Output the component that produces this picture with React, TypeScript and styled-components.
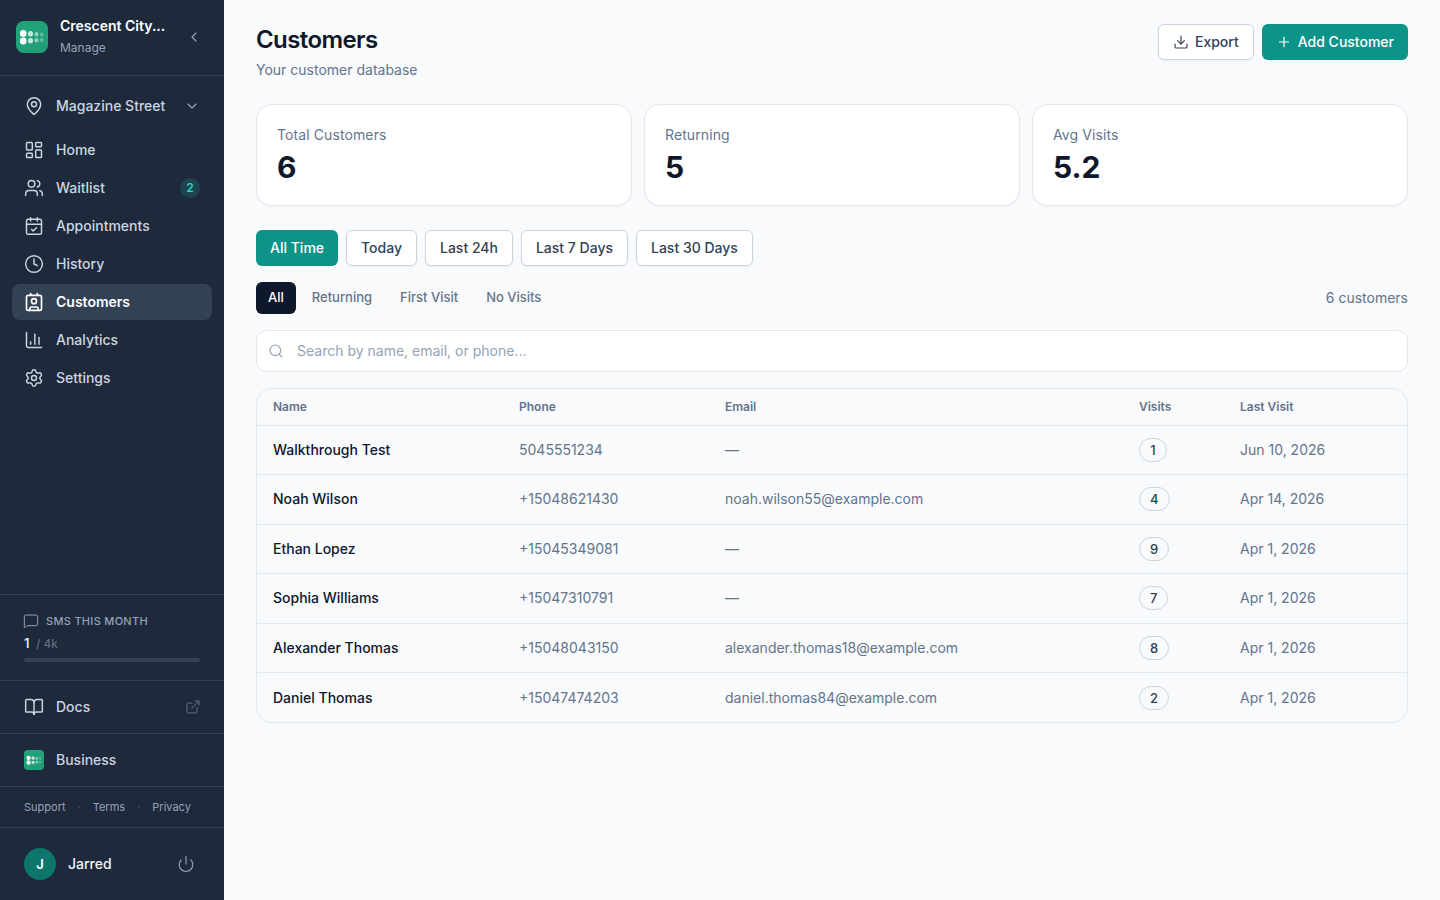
import React from 'react';
import styled, { createGlobalStyle } from 'styled-components';
import {
  BookOpen,
  CalendarCheck,
  ChartColumn,
  ChevronDown,
  ChevronLeft,
  Clock,
  Contact,
  Download,
  ExternalLink,
  LayoutDashboard,
  MapPin,
  MessageSquare,
  Plus,
  Power,
  Search,
  Settings,
  Users,
} from 'lucide-react';

const GlobalStyle = createGlobalStyle`
  * { box-sizing: border-box; }
  html, body { margin: 0; padding: 0; height: 100%; }
  body {
    font-family: Inter, "Liberation Sans", sans-serif;
    line-height: 20px;
    background: #f8fafc;
    color: #0f172a;
  }
`;

const Page = styled.div`
  display: flex;
  width: 100%;
  height: 900px;
  overflow: hidden;
  background: #f8fafc;
`;

const Sidebar = styled.aside`
  width: 224px;
  flex-shrink: 0;
  height: 100%;
  display: flex;
  flex-direction: column;
  background: #1e293b;
`;

const Brand = styled.div`
  height: 76px;
  flex-shrink: 0;
  display: flex;
  align-items: center;
  padding: 0 22px 2px 16px;
  border-bottom: 1px solid #334155;
`;

const BrandTile = styled.div<{ $size: number; $radius: number }>`
  width: ${p => p.$size}px;
  height: ${p => p.$size}px;
  border-radius: ${p => p.$radius}px;
  flex-shrink: 0;
  display: flex;
  background: linear-gradient(135deg, #22a57a, #1f9d78);
`;

const BrandText = styled.div`
  flex: 1;
  margin: 0 0 2px 12px;
  min-width: 0;
`;

const BrandName = styled.div`
  color: #fff;
  font-size: 14px;
  font-weight: 600;
  line-height: 20px;
`;

const BrandSub = styled.div`
  color: #94a3b8;
  font-size: 12px;
  line-height: 16px;
  margin-top: 4px;
`;

const Collapse = styled.span`
  display: flex;
  color: #94a3b8;
`;

const Nav = styled.nav`
  flex: 1;
  padding: 12px 12px 0;
`;

const LocationRow = styled.div`
  height: 36px;
  display: flex;
  align-items: center;
  gap: 12px;
  padding: 0 12px;
  margin-bottom: 8px;
  color: #cbd5e1;
  font-size: 14px;
  font-weight: 500;
  span { flex: 1; }
`;

const NavItem = styled.a<{ $active?: boolean }>`
  height: 36px;
  margin-bottom: 2px;
  display: flex;
  align-items: center;
  gap: 12px;
  padding: 0 12px;
  border-radius: 8px;
  font-size: 14px;
  font-weight: ${p => (p.$active ? 600 : 500)};
  color: ${p => (p.$active ? '#fff' : '#cbd5e1')};
  background: ${p => (p.$active ? '#334155' : 'transparent')};
  span { flex: 1; }
`;

const NavBadge = styled.b`
  width: 20px;
  height: 20px;
  border-radius: 50%;
  display: flex;
  align-items: center;
  justify-content: center;
  font-size: 12px;
  font-weight: 600;
  color: #2dd4bf;
  background: rgba(20, 184, 166, 0.2);
`;

const SmsBlock = styled.div`
  height: 86px;
  flex-shrink: 0;
  padding: 18px 24px 0;
  border-top: 1px solid #334155;
`;

const SmsHead = styled.div`
  display: flex;
  align-items: center;
  gap: 7px;
  color: #94a3b8;
  font-size: 11px;
  font-weight: 500;
  letter-spacing: 0.3px;
  line-height: 16px;
  svg { margin-left: -1px; }
`;

const SmsCount = styled.div`
  margin-top: 6px;
  font-size: 12px;
  line-height: 16px;
  color: #64748b;
  b { color: #e2e8f0; font-size: 13px; font-weight: 600; margin-right: 3px; }
`;

const SmsTrack = styled.div`
  height: 4px;
  margin-top: 6px;
  border-radius: 2px;
  background: #334155;
`;

const FooterRow = styled.div`
  height: 53px;
  flex-shrink: 0;
  display: flex;
  align-items: center;
  gap: 12px;
  padding: 0 23px 0 24px;
  border-top: 1px solid #334155;
  color: #cbd5e1;
  font-size: 14px;
  font-weight: 500;
  span { flex: 1; }
`;

const FooterLinks = styled.div`
  height: 41px;
  flex-shrink: 0;
  display: flex;
  align-items: center;
  gap: 12px;
  padding: 0 24px;
  border-top: 1px solid #334155;
  font-size: 11px;
  color: #94a3b8;
  i { font-style: normal; color: #475569; }
`;

const UserRow = styled.div`
  height: 73px;
  flex-shrink: 0;
  display: flex;
  align-items: center;
  padding: 0 29px 0 24px;
  border-top: 1px solid #334155;
`;

const Avatar = styled.div`
  width: 32px;
  height: 32px;
  border-radius: 50%;
  display: flex;
  align-items: center;
  justify-content: center;
  background: #0f766e;
  color: #fff;
  font-size: 13px;
  font-weight: 600;
`;

const UserName = styled.span`
  flex: 1;
  margin-left: 12px;
  color: #f1f5f9;
  font-size: 14px;
  font-weight: 500;
`;

const Main = styled.main`
  flex: 1;
  min-width: 0;
  padding: 24px 32px;
`;

const Header = styled.header`
  display: flex;
  justify-content: space-between;
  align-items: flex-start;
  height: 56px;
`;

const Title = styled.h1`
  margin: 0;
  font-size: 24px;
  line-height: 32px;
  font-weight: 600;
  letter-spacing: -0.6px;
  color: #0f172a;
`;

const Subtitle = styled.p`
  margin: 4px 0 0;
  font-size: 14px;
  line-height: 20px;
  color: #64748b;
`;

const Actions = styled.div`
  display: flex;
  gap: 8px;
`;

const Button = styled.button<{ $primary?: boolean }>`
  height: 36px;
  display: flex;
  align-items: center;
  gap: 6px;
  padding: 0 14px;
  border-radius: 6px;
  font-family: inherit;
  font-size: 14px;
  line-height: 20px;
  font-weight: 500;
  border: ${p => (p.$primary ? '0' : '1px solid #cbd5e1')};
  background: ${p => (p.$primary ? '#0d9488' : '#fff')};
  color: ${p => (p.$primary ? '#fff' : '#334155')};
  box-shadow: ${p => (p.$primary ? 'none' : '0 1px 2px rgba(15, 23, 42, 0.05)')};
`;

const Stats = styled.section`
  display: grid;
  grid-template-columns: repeat(3, 1fr);
  gap: 12px;
  margin-top: 24px;
`;

const StatCard = styled.div`
  height: 102px;
  padding: 20px 20px 0;
  background: #fff;
  border: 1px solid #e2e8f0;
  border-radius: 16px;
  box-shadow: 0 1px 2px rgba(15, 23, 42, 0.04);
`;

const StatLabel = styled.div`
  font-size: 14px;
  line-height: 20px;
  letter-spacing: 0.1px;
  color: #64748b;
`;

const StatValue = styled.div`
  margin-top: 4px;
  font-size: 30px;
  line-height: 36px;
  font-weight: 700;
  color: #0f172a;
`;

const Ranges = styled.div`
  display: flex;
  gap: 8px;
  margin-top: 24px;
`;

const FilterRow = styled.div`
  display: flex;
  align-items: center;
  margin-top: 16px;
  height: 32px;
`;

const FilterTab = styled.div<{ $active?: boolean }>`
  height: 32px;
  display: flex;
  align-items: center;
  padding: 0 12px 2px;
  margin-right: 4px;
  border-radius: 6px;
  font-size: 13px;
  font-weight: 500;
  color: ${p => (p.$active ? '#fff' : '#64748b')};
  background: ${p => (p.$active ? '#0f172a' : 'transparent')};
`;

const Count = styled.div`
  margin-left: auto;
  font-size: 14px;
  color: #64748b;
`;

const SearchBox = styled.div`
  height: 42px;
  margin-top: 16px;
  display: flex;
  align-items: center;
  gap: 13px;
  padding: 0 11px;
  background: #fff;
  border: 1px solid #e2e8f0;
  border-radius: 10px;
  font-size: 14px;
  color: #94a3b8;
`;

const TableWrap = styled.div`
  margin-top: 16px;
  border: 1px solid #e2e8f0;
  border-radius: 16px;
  overflow: hidden;
`;

const Table = styled.table`
  width: 100%;
  table-layout: fixed;
  border-collapse: collapse;
`;

const Th = styled.th<{ $width?: number }>`
  width: ${p => (p.$width ? `${p.$width}px` : 'auto')};
  height: 36px;
  padding: 0 16px;
  text-align: left;
  font-size: 12px;
  font-weight: 600;
  color: #64748b;
  border-bottom: 1px solid #e2e8f0;
`;

const Td = styled.td<{ $name?: boolean }>`
  height: 49.5px;
  padding: 0 16px;
  font-size: 14px;
  font-weight: ${p => (p.$name ? 500 : 400)};
  color: ${p => (p.$name ? '#0f172a' : '#64748b')};
  border-bottom: 1px solid #e2e8f0;
  tr:last-child & { border-bottom: 0; }
`;

const VisitBadge = styled.span`
  display: inline-flex;
  justify-content: center;
  align-items: center;
  height: 24px;
  min-width: 28px;
  padding: 0 10px;
  border: 1px solid #cbd5e1;
  border-radius: 12px;
  font-size: 13px;
  font-weight: 500;
  color: #334155;
`;

// columns of dots that fade to the right, same mark in both tiles
function BrandMark({ size }: { size: number }) {
  return (
    <svg width={size} height={size} viewBox="0 0 32 32" fill="#fff">
      <rect x="4" y="9" width="6.5" height="7" rx="3.25" />
      <rect x="4" y="16.5" width="6.5" height="7" rx="3.25" />
      <g opacity="0.75">
        <rect x="12" y="10" width="5" height="5.5" rx="2.5" />
        <rect x="12" y="17" width="5" height="5.5" rx="2.5" />
      </g>
      <g opacity="0.5">
        <rect x="18.5" y="11" width="4" height="4.5" rx="2" />
        <rect x="18.5" y="17" width="4" height="4.5" rx="2" />
      </g>
      <g opacity="0.3">
        <rect x="24" y="11.5" width="3.5" height="4" rx="1.75" />
        <rect x="24" y="17" width="3.5" height="4" rx="1.75" />
      </g>
    </svg>
  );
}

const navItems = [
  { label: 'Home', icon: LayoutDashboard },
  { label: 'Waitlist', icon: Users, badge: 2 },
  { label: 'Appointments', icon: CalendarCheck },
  { label: 'History', icon: Clock },
  { label: 'Customers', icon: Contact, active: true },
  { label: 'Analytics', icon: ChartColumn },
  { label: 'Settings', icon: Settings },
];

const customers = [
  { name: 'Walkthrough Test', phone: '5045551234', email: '—', visits: 1, last: 'Jun 10, 2026' },
  { name: 'Noah Wilson', phone: '+15048621430', email: 'noah.wilson55@example.com', visits: 4, last: 'Apr 14, 2026' },
  { name: 'Ethan Lopez', phone: '+15045349081', email: '—', visits: 9, last: 'Apr 1, 2026' },
  { name: 'Sophia Williams', phone: '+15047310791', email: '—', visits: 7, last: 'Apr 1, 2026' },
  { name: 'Alexander Thomas', phone: '+15048043150', email: 'alexander.thomas18@example.com', visits: 8, last: 'Apr 1, 2026' },
  { name: 'Daniel Thomas', phone: '+15047474203', email: 'daniel.thomas84@example.com', visits: 2, last: 'Apr 1, 2026' },
];

export default function App() {
  return (
    <Page>
      <GlobalStyle />
      <Sidebar>
        <Brand>
          <BrandTile $size={32} $radius={8}>
            <BrandMark size={32} />
          </BrandTile>
          <BrandText>
            <BrandName>Crescent City...</BrandName>
            <BrandSub>Manage</BrandSub>
          </BrandText>
          <Collapse>
            <ChevronLeft size={16} strokeWidth={1.75} />
          </Collapse>
        </Brand>
        <Nav>
          <LocationRow>
            <MapPin size={20} strokeWidth={1.75} />
            <span>Magazine Street</span>
            <ChevronDown size={16} strokeWidth={1.75} color="#94a3b8" />
          </LocationRow>
          {navItems.map(item => (
            <NavItem key={item.label} $active={item.active}>
              <item.icon size={20} strokeWidth={item.active ? 2 : 1.75} />
              <span>{item.label}</span>
              {item.badge && <NavBadge>{item.badge}</NavBadge>}
            </NavItem>
          ))}
        </Nav>
        <SmsBlock>
          <SmsHead>
            <MessageSquare size={16} strokeWidth={1.5} />
            SMS THIS MONTH
          </SmsHead>
          <SmsCount>
            <b>1</b> / 4k
          </SmsCount>
          <SmsTrack />
        </SmsBlock>
        <FooterRow>
          <BookOpen size={20} strokeWidth={1.75} />
          <span>Docs</span>
          <ExternalLink size={16} strokeWidth={1.5} color="#64748b" />
        </FooterRow>
        <FooterRow>
          <BrandTile $size={20} $radius={4}>
            <BrandMark size={20} />
          </BrandTile>
          <span>Business</span>
        </FooterRow>
        <FooterLinks>
          Support <i>·</i> Terms <i>·</i> Privacy
        </FooterLinks>
        <UserRow>
          <Avatar>J</Avatar>
          <UserName>Jarred</UserName>
          <Power size={18} strokeWidth={1.5} color="#94a3b8" />
        </UserRow>
      </Sidebar>
      <Main>
        <Header>
          <div>
            <Title>Customers</Title>
            <Subtitle>Your customer database</Subtitle>
          </div>
          <Actions>
            <Button>
              <Download size={16} strokeWidth={1.75} />
              Export
            </Button>
            <Button $primary>
              <Plus size={16} strokeWidth={1.75} />
              Add Customer
            </Button>
          </Actions>
        </Header>
        <Stats>
          <StatCard>
            <StatLabel>Total Customers</StatLabel>
            <StatValue>6</StatValue>
          </StatCard>
          <StatCard>
            <StatLabel>Returning</StatLabel>
            <StatValue>5</StatValue>
          </StatCard>
          <StatCard>
            <StatLabel>Avg Visits</StatLabel>
            <StatValue>5.2</StatValue>
          </StatCard>
        </Stats>
        <Ranges>
          <Button $primary>All Time</Button>
          <Button>Today</Button>
          <Button>Last 24h</Button>
          <Button>Last 7 Days</Button>
          <Button>Last 30 Days</Button>
        </Ranges>
        <FilterRow>
          <FilterTab $active>All</FilterTab>
          <FilterTab>Returning</FilterTab>
          <FilterTab>First Visit</FilterTab>
          <FilterTab>No Visits</FilterTab>
          <Count>6 customers</Count>
        </FilterRow>
        <SearchBox>
          <Search size={16} strokeWidth={1.75} />
          Search by name, email, or phone...
        </SearchBox>
        <TableWrap>
          <Table>
            <thead>
              <tr>
                <Th $width={246}>Name</Th>
                <Th $width={206}>Phone</Th>
                <Th $width={414}>Email</Th>
                <Th $width={101}>Visits</Th>
                <Th>Last Visit</Th>
              </tr>
            </thead>
            <tbody>
              {customers.map(c => (
                <tr key={c.name}>
                  <Td $name>{c.name}</Td>
                  <Td>{c.phone}</Td>
                  <Td>{c.email}</Td>
                  <Td>
                    <VisitBadge>{c.visits}</VisitBadge>
                  </Td>
                  <Td>{c.last}</Td>
                </tr>
              ))}
            </tbody>
          </Table>
        </TableWrap>
      </Main>
    </Page>
  );
}
